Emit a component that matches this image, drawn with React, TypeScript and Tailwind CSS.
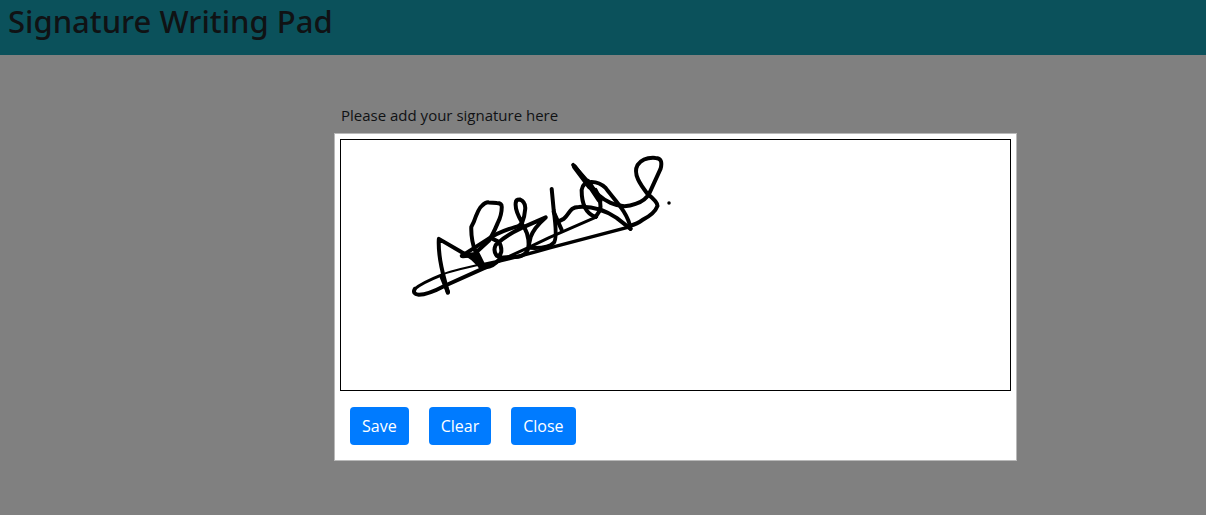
const pageFont = "font-['Open_Sans','Noto_Sans',sans-serif]";

function Signature() {
  return (
    <svg
      role="img"
      aria-label="Signature"
      viewBox="341 140 670 250"
      preserveAspectRatio="xMinYMin meet"
      className="block h-[250px] w-full"
      fill="none"
      stroke="#000"
      strokeWidth="4"
      strokeLinecap="round"
      strokeLinejoin="round"
    >
      <path d="M448 293L445 281Q438 256 439 239L462 252.500Q472 257 475 261T483 267Q492 269 500 259" />
      <path d="M442 277L448 292" strokeWidth="4.500" />
      <path d="M476 253Q471 240 471.500 227L474 222Q479 208 482 206Q486 202 489 202.500L497 203Q502 203 502 207Q502 215 498 223Q493 235 489 241L477 252L484 266" />
      <path d="M463 256L474 255L481 267" strokeWidth="5" />
      <path d="M462 256L487 240Q499 232 516 227Q521 226 522 222Q515 210 516 203Q516 199.500 520 199.500Q526 202 525.500 209Q525 217 522 224Q529 232 529 246" />
      <path d="M491 238L499 242Q502 246 501.500 252Q500 257 497 256Q493 251 496 245Q505 236 522 228L546 217.500Q534 228 531 237L528 250Q524 258 513 257L500 258" />
      <path d="M552 189L554 210Q558 239 554 243Q549 249 530 248" />
      <path d="M554 212L562 230" />
      <path d="M558 222L564 219C570 214 570 207 579 207C596 206 608 212 617 218L631 229" />
      <path d="M573.500 165L590 184Q598 197 611 203Q624 209 636 204Q646 201 650 193L661 169Q664 158 656 158Q644 157 638 165C633 174 641 185 648 194Q658 202 658 206Q655 214 643 220Q638 224 630 226" />
      <path d="M575 167L590 187" strokeWidth="5" />
      <path d="M588 182L600 200" strokeWidth="6" />
      <path d="M596 217C587 214 582 205 582 190Q583 182 592 182Q600 182 606 188C614 199 629 213 631 229" />
      <path d="M596 190Q603 202 600 211L596 217" />
      <path d="M630 227L550 248Q519 257 483 265" strokeWidth="3.500" />
      <path d="M483 264Q448 272 442 275" strokeWidth="2" />
      <path d="M442 275Q422 283 415 289" strokeWidth="3" />
      <path d="M415 289Q412 294 419 295Q428 295 445 286L487 267" />
      <path d="M487 267L528 248L550 237.500L597 217" strokeWidth="3" />
      <path d="M669.500 203h.01" strokeWidth="3.500" />
    </svg>
  );
}

export default function App() {
  return (
    <div className={`min-h-screen bg-[#808080] text-[#101214] ${pageFont}`}>
      <header className="bg-[#0b515b] px-2 pt-0.5 pb-3.5">
        <h1 className="font-['Noto_Sans','Open_Sans',sans-serif] text-[31px] leading-[39px] font-medium">
          Signature Writing Pad
        </h1>
      </header>
      <main className="pt-12 pr-[189px] pb-12 pl-[334px]">
        <p className="px-[7px] pb-1.5 text-[15px] leading-6">Please add your signature here</p>
        <section
          aria-label="Signature pad"
          className="border border-[#b9b9b9] bg-white p-[5px]"
        >
          <div className="border border-black">
            <Signature />
          </div>
          <div className="flex gap-5 px-2.5 pt-4 pb-2.5 text-[16px] leading-6 text-white">
            <button type="button" className="rounded bg-[#007bff] px-3 py-[7px]">Save</button>
            <button type="button" className="rounded bg-[#007bff] px-3 py-[7px]">Clear</button>
            <button type="button" className="rounded bg-[#007bff] px-3 py-[7px]">Close</button>
          </div>
        </section>
      </main>
    </div>
  );
}
